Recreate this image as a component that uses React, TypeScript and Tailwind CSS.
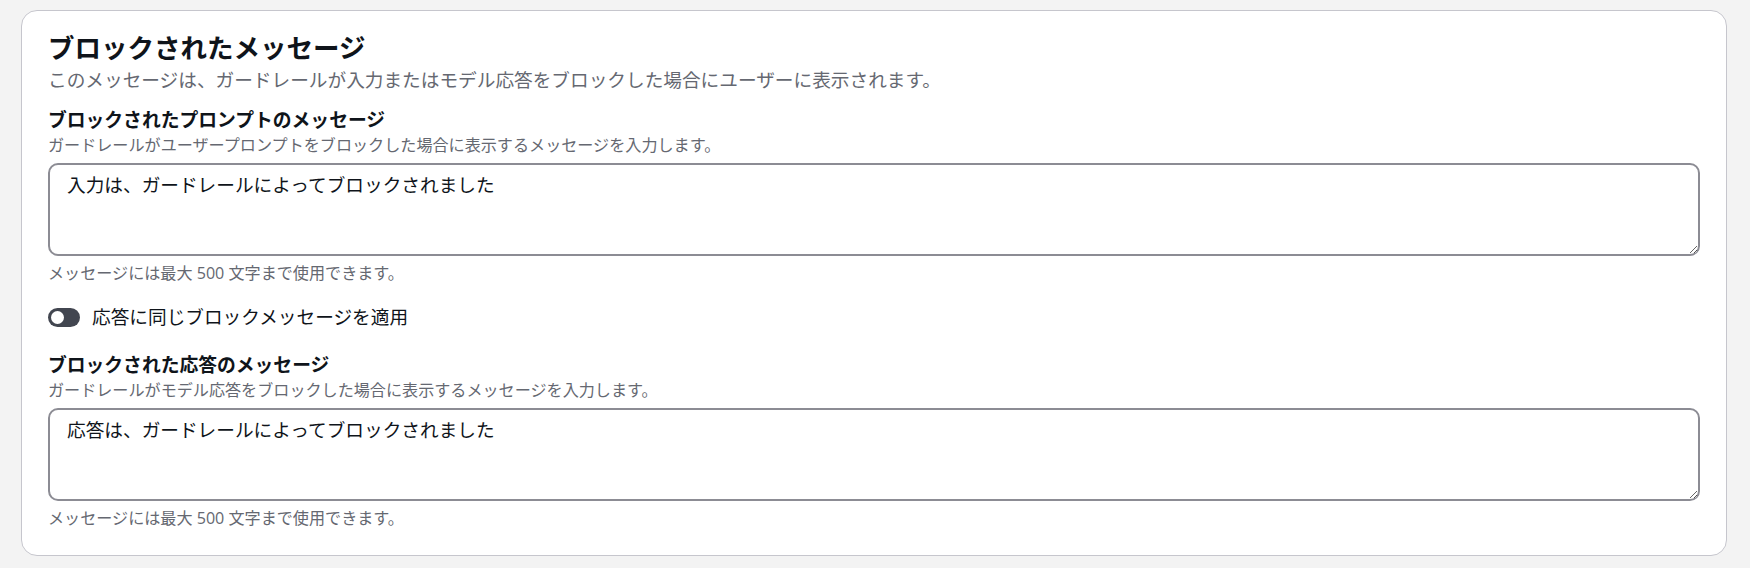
import React from "react";

const font = { fontFamily: '"Open Sans", "Noto Sans CJK JP", sans-serif' };

function Field({
  label,
  description,
  value,
}: {
  label: string;
  description: string;
  value: string;
}) {
  return (
    <div className="flex flex-col">
      <div className="text-[18.8px] leading-[24px] font-bold text-[#0f141a]">{label}</div>
      <div className="mt-[3px] text-[16.1px] leading-[21px] text-[#656871]">{description}</div>
      <textarea
        defaultValue={value}
        className="mt-[7px] h-[93px] w-full rounded-[10px] border-2 border-[#8c8c94] bg-white px-[17px] pt-[8px] text-[18.67px] leading-[24px] text-[#0f141a] outline-none"
        style={font}
      />
      <div className="mt-[7px] text-[16.1px] leading-[21px] text-[#656871]">
        メッセージには最大 500 文字まで使用できます。
      </div>
    </div>
  );
}

export default function App() {
  return (
    <div className="min-h-[568px] bg-[#f3f3f3] pl-[21px] pr-[23px] pt-[10px] pb-[13px]" style={font}>
      <div className="rounded-[16px] border border-[#c6c6cd] bg-white px-[26px] pt-[21px] pb-[26px]">
        <h2 className="text-[26.5px] leading-[32px] font-bold text-[#0f141a]">ブロックされたメッセージ</h2>
        <p className="mt-[4px] text-[18.67px] leading-[24px] text-[#656871]">
          このメッセージは、ガードレールが入力またはモデル応答をブロックした場合にユーザーに表示されます。
        </p>
        <div className="mt-[16px]">
          <Field
            label="ブロックされたプロンプトのメッセージ"
            description="ガードレールがユーザープロンプトをブロックした場合に表示するメッセージを入力します。"
            value="入力は、ガードレールによってブロックされました"
          />
        </div>
        <div className="mt-[21px] flex items-center gap-[12px]">
          <div className="relative h-[19px] w-[32px] rounded-full bg-[#424650]">
            <div className="absolute left-[3px] top-[3px] h-[13px] w-[13px] rounded-full bg-white" />
          </div>
          <span className="text-[18.67px] leading-[24px] text-[#0f141a]">応答に同じブロックメッセージを適用</span>
        </div>
        <div className="mt-[24px]">
          <Field
            label="ブロックされた応答のメッセージ"
            description="ガードレールがモデル応答をブロックした場合に表示するメッセージを入力します。"
            value="応答は、ガードレールによってブロックされました"
          />
        </div>
      </div>
    </div>
  );
}
